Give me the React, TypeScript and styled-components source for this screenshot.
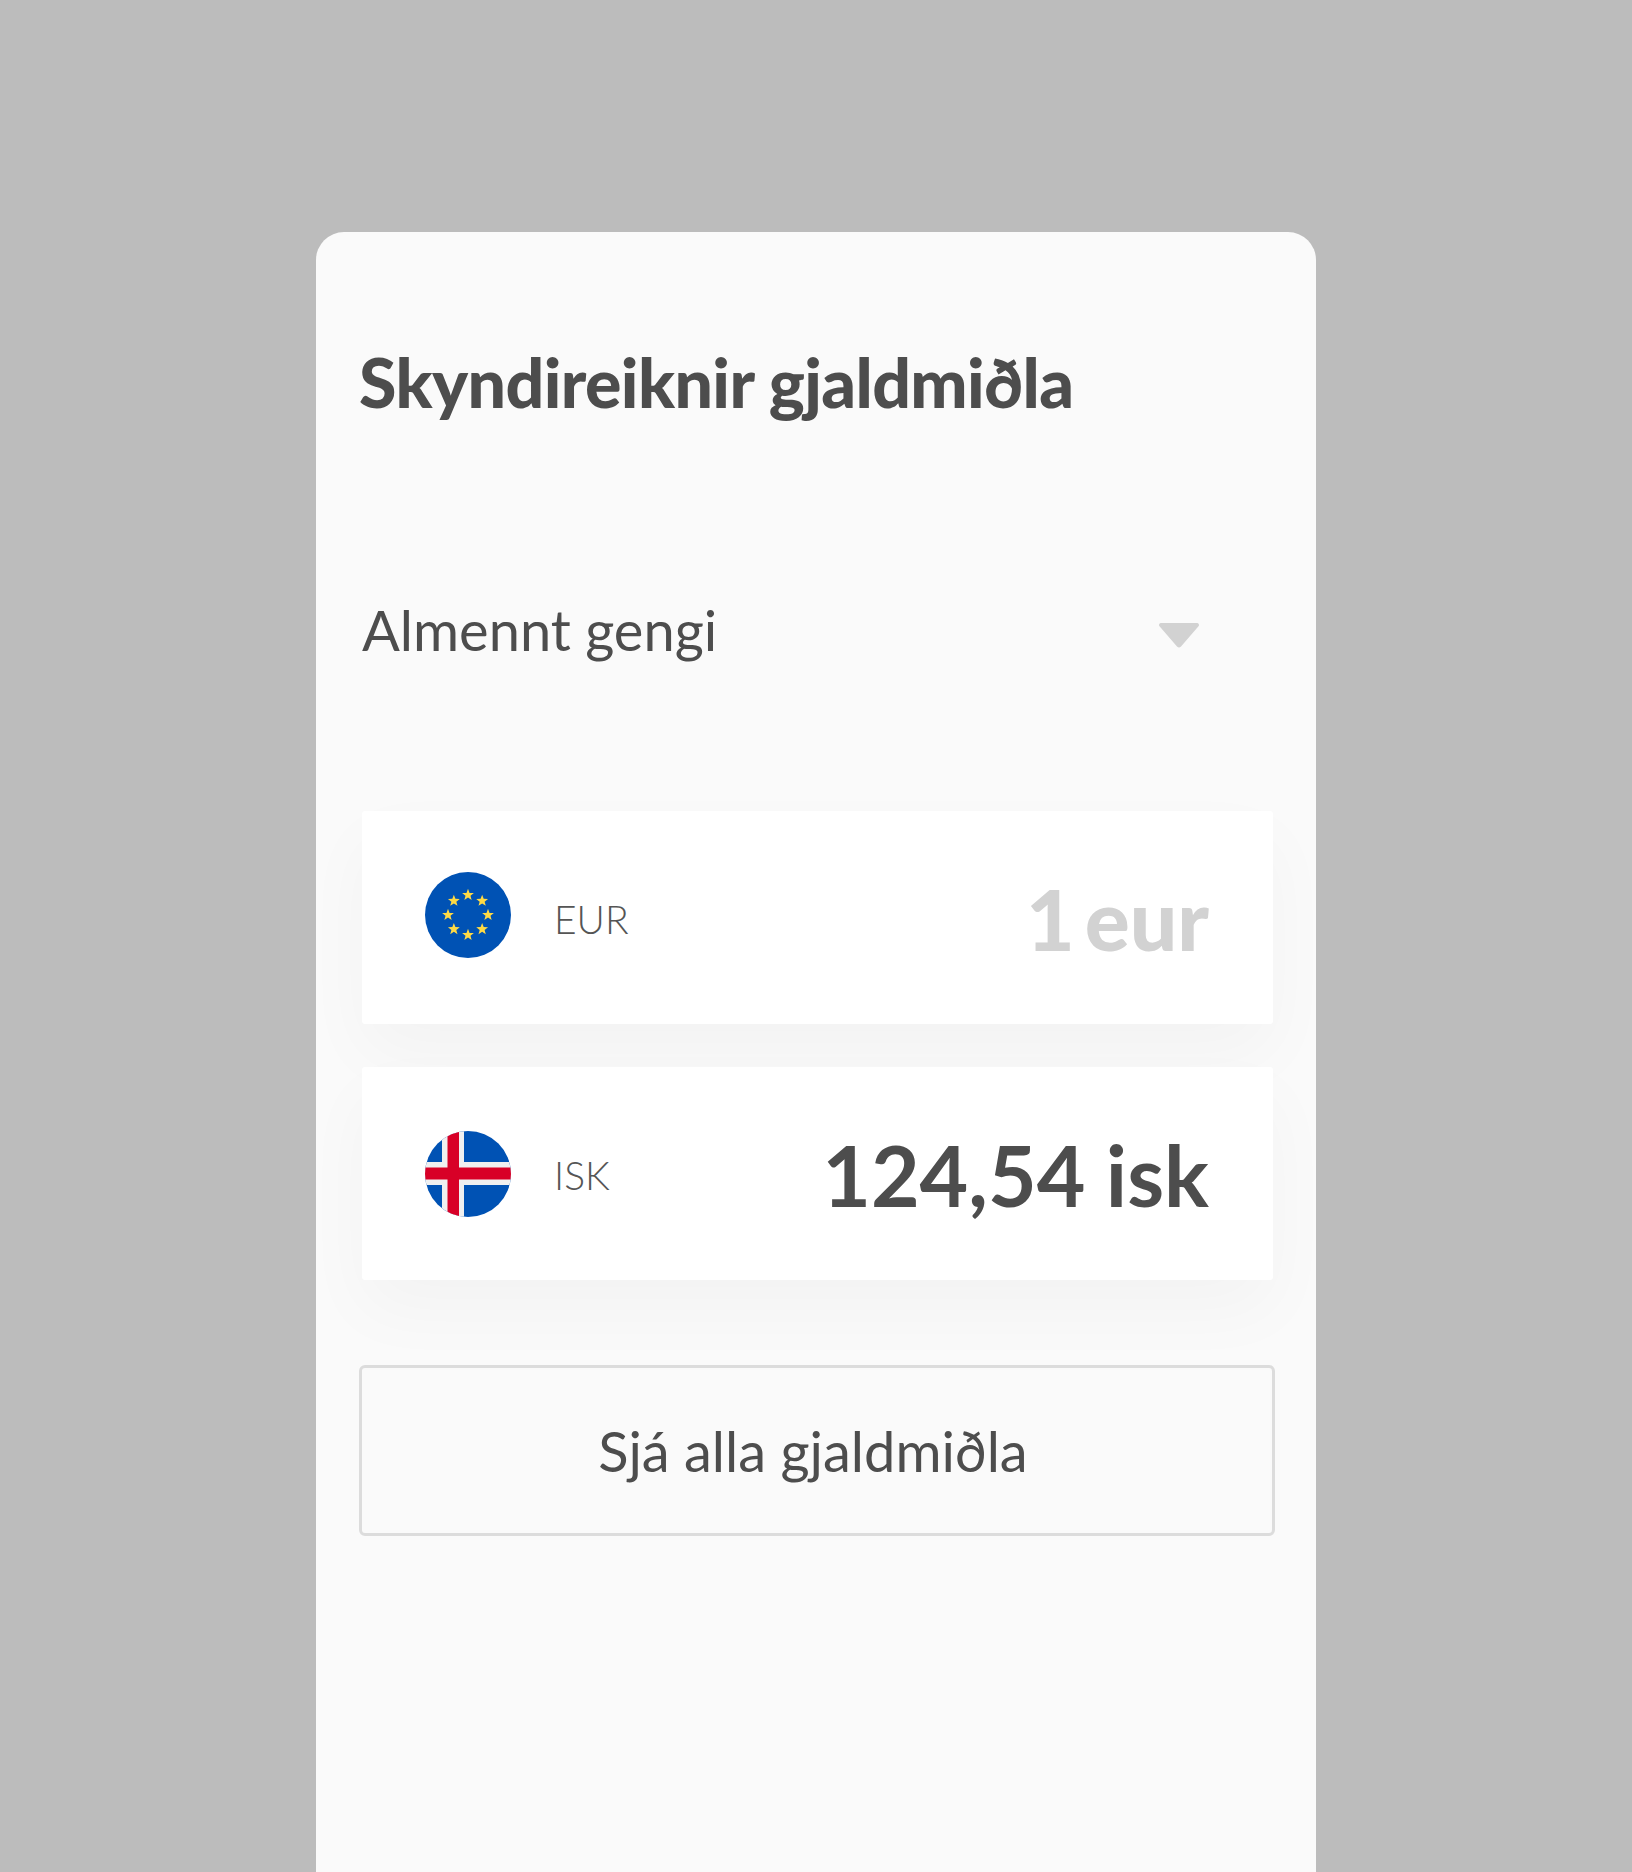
import styled, {createGlobalStyle} from "styled-components";

const GlobalStyle = createGlobalStyle`
    html, body {
        margin: 0;
        height: 1872px;
        overflow: hidden;
        background: #bcbcbc;
        font-family: "Lato", "Liberation Sans", sans-serif;
    }
`

const Page = styled.div`
    display: flex;
    justify-content: center;
    height: 1872px;
    padding-top: 232px;
    box-sizing: border-box;`

const Panel = styled.main`
    width: 1000px;
    height: 1640px;
    box-sizing: border-box;
    padding: 0 41px 0 43px;
    background: #fafafa;
    border-radius: 28px 28px 0 0;
    color: #4d4d4d;`

const Title = styled.h1`
    margin: 0;
    padding-top: 100px;
    height: 270px;
    box-sizing: border-box;
    font-size: 68px;
    line-height: 100px;
    font-weight: 900;
    letter-spacing: -0.6px;
    white-space: nowrap;`

const RateSelect = styled.div`
    display: flex;
    align-items: center;
    justify-content: space-between;
    height: 309px;
    padding: 92px 75px 145px 3px;
    box-sizing: border-box;`

const RateLabel = styled.span`
    font-size: 56px;
    line-height: 64px;
    font-weight: 400;`

const Caret = styled.svg`
    width: 42px;
    height: 26px;
    margin-top: 10px;`

const Rows = styled.div`
    display: flex;
    flex-direction: column;
    gap: 43px;
    margin: 0 2px 0 3px;`

const Row = styled.section`
    display: flex;
    align-items: center;
    height: 213px;
    box-sizing: border-box;
    padding: 0 64px 0 63px;
    background: #fff;
    border-radius: 3px;
    box-shadow: 0 30px 70px rgba(0, 0, 0, 0.03);`

const FlagIcon = styled.svg<{ $shift: number }>`
    width: 86px;
    height: 86px;
    flex: none;
    margin-top: ${props => props.$shift}px;`

const Code = styled.span`
    margin-left: 43px;
    margin-top: 3px;
    font-size: 39px;
    font-weight: 300;
    color: #555;`

const Amount = styled.span<{ $muted?: boolean }>`
    margin-left: auto;
    margin-top: 1px;
    font-size: 84px;
    font-weight: ${props => props.$muted ? 900 : 700};
    word-spacing: ${props => props.$muted ? -10 : 0}px;
    color: ${props => props.$muted ? "#d2d2d2" : "#4d4d4d"};
    white-space: nowrap;`

const AllCurrencies = styled.button`
    display: block;
    width: 916px;
    height: 171px;
    margin-top: 85px;
    padding: 0 8px 0 0;
    background: transparent;
    border: 3px solid #dcdcdc;
    border-radius: 6px;
    font-family: inherit;
    font-size: 56px;
    font-weight: 400;
    color: #4d4d4d;`

const starPoints = (cx: number, cy: number, r: number) =>
    Array.from({length: 10}, (_, i) => {
        const angle = -Math.PI / 2 + i * Math.PI / 5
        const radius = i % 2 === 0 ? r : r * 0.42
        return `${cx + radius * Math.cos(angle)},${cy + radius * Math.sin(angle)}`
    }).join(" ")

const EuFlag = () => (
    <FlagIcon viewBox="0 0 86 86" $shift={-5}>
        <circle cx="43" cy="43" r="43" fill="#0052b4"/>
        {Array.from({length: 8}, (_, i) => {
            const angle = i * Math.PI / 4
            return <polygon key={i} fill="#ffda44"
                            points={starPoints(43 + 20 * Math.sin(angle), 43 - 20 * Math.cos(angle), 6.2)}/>
        })}
    </FlagIcon>
)

const IsFlag = () => (
    <FlagIcon viewBox="0 0 86 86" $shift={0}>
        <defs>
            <clipPath id="isClip">
                <circle cx="43" cy="43" r="43"/>
            </clipPath>
        </defs>
        <g clipPath="url(#isClip)">
            <rect width="86" height="86" fill="#0052b4"/>
            <rect x="17" width="22" height="86" fill="#f0f0f0"/>
            <rect y="31" width="86" height="23" fill="#f0f0f0"/>
            <rect x="22.5" width="11.5" height="86" fill="#d80027"/>
            <rect y="36.5" width="86" height="12" fill="#d80027"/>
        </g>
    </FlagIcon>
)

export default function App() {
    return (
        <Page>
            <GlobalStyle/>
            <Panel>
                <Title>Skyndireiknir gjaldmiðla</Title>
                <RateSelect>
                    <RateLabel>Almennt gengi</RateLabel>
                    <Caret viewBox="0 0 42 26">
                        <path d="M3 1h36a2 2 0 0 1 1.5 3.3L23 24.5a3 3 0 0 1-4 0L1.500 4.300A2 2 0 0 1 3 1z" fill="#d2d2d2"/>
                    </Caret>
                </RateSelect>
                <Rows>
                    <Row>
                        <EuFlag/>
                        <Code>EUR</Code>
                        <Amount $muted>1 eur</Amount>
                    </Row>
                    <Row>
                        <IsFlag/>
                        <Code>ISK</Code>
                        <Amount>124,54 isk</Amount>
                    </Row>
                </Rows>
                <AllCurrencies>Sjá alla gjaldmiðla</AllCurrencies>
            </Panel>
        </Page>
    );
}
